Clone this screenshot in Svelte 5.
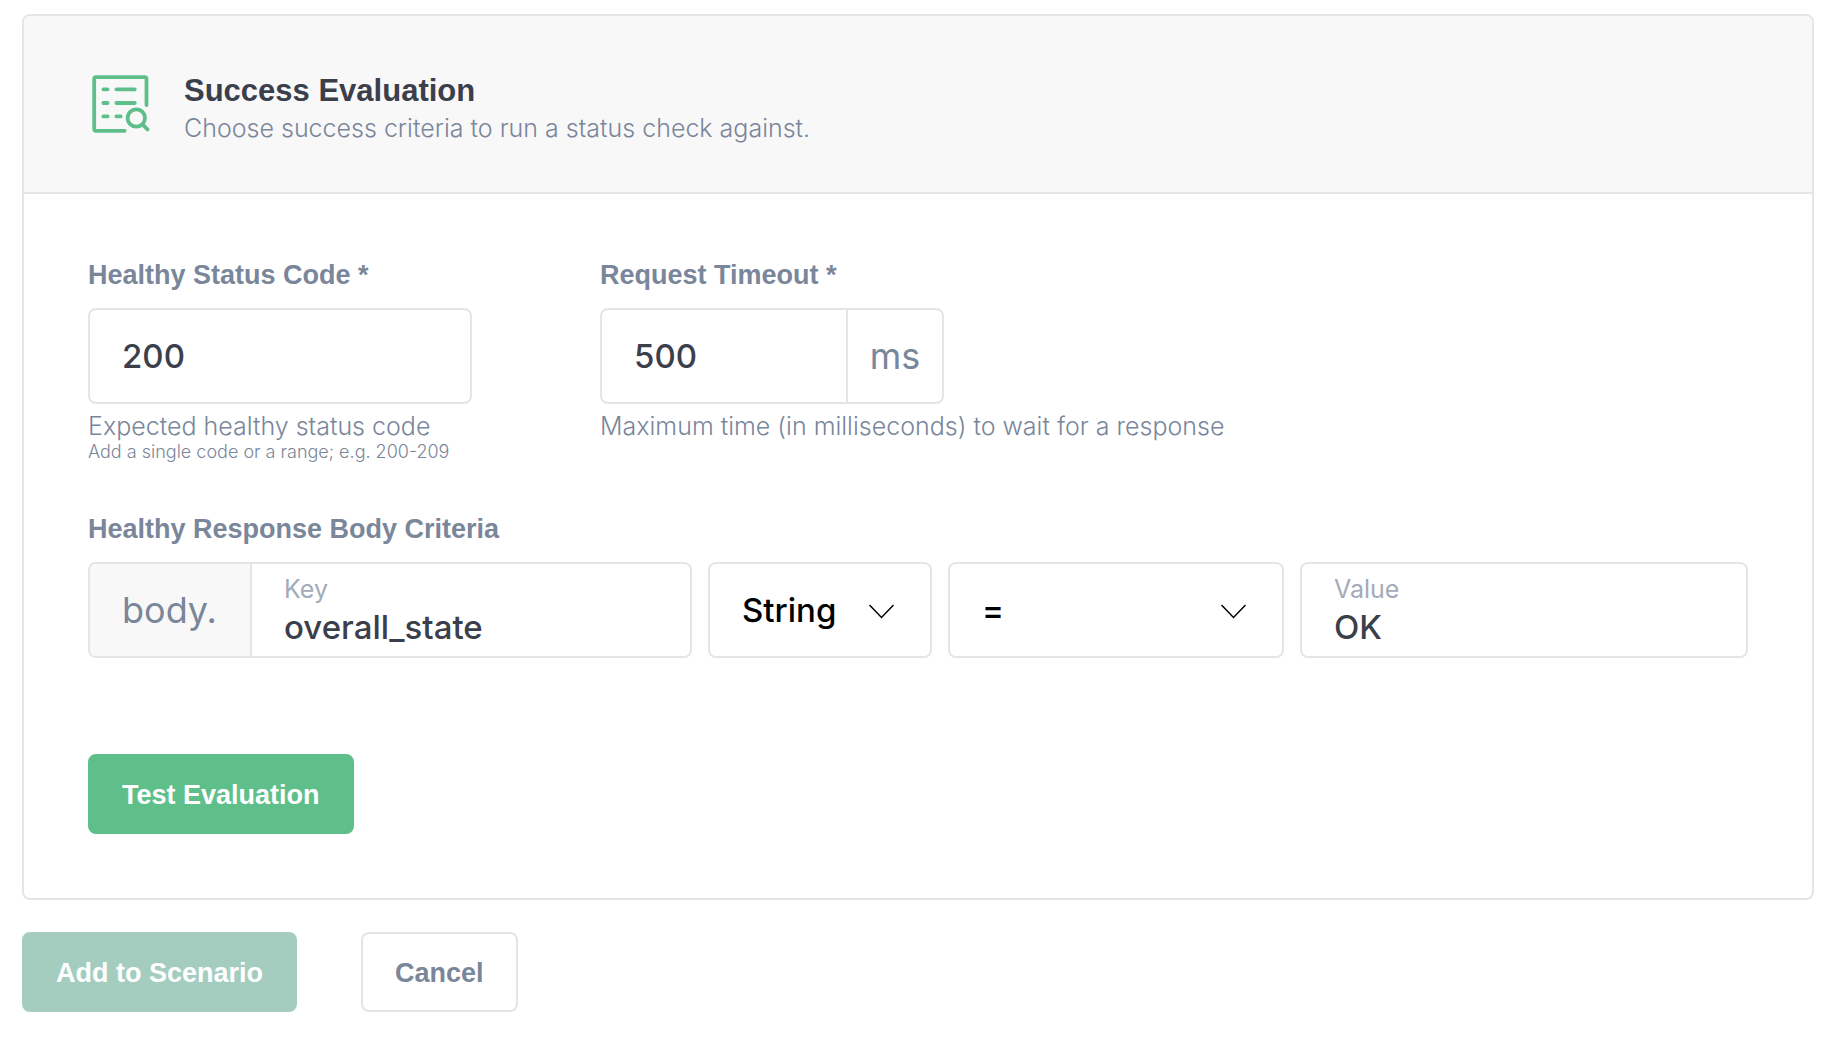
<script lang="ts">
	let statusCode = $state('200');
	let timeout = $state('500');
	let bodyKey = $state('overall_state');
	let dataType = $state('String');
	let operator = $state('=');
	let expected = $state('OK');

	const dataTypes = ['String', 'Number'];
	const operators = ['=', '!=', '>', '<'];
</script>

{#snippet chevron()}
	<svg class="chevron" viewBox="0 0 26 18" aria-hidden="true">
		<path d="M1.5 4 13.5 16.5 25.5 4" />
	</svg>
{/snippet}

<main class="page">
	<form class="card" id="evaluation" onsubmit={(e) => e.preventDefault()}>
		<header class="card-head">
			<svg class="icon" viewBox="0 0 64 64" aria-hidden="true">
				<path d="M36.6 58.8H8A1.8 1.8 0 0 1 6.2 57V7A1.8 1.8 0 0 1 8 5.2h48.7A1.8 1.8 0 0 1 58.5 7v26" />
				<path d="M15.4 17.3h4.2M28.4 17.3h18.4M15.4 31h4.2M28.4 31h18.4M15.4 44.4h4.2M28.4 44.4h4.2" />
				<circle cx="48.3" cy="46" r="8.7" />
				<path d="m54.7 52.6 4.8 4.8" />
			</svg>
			<div class="head-text">
				<h2>Success Evaluation</h2>
				<p>Choose success criteria to run a status check against.</p>
			</div>
		</header>

		<div class="card-body">
			<div class="fields">
				<div class="field code">
					<label class="label" for="status-code">Healthy Status Code *</label>
					<div class="box">
						<input id="status-code" type="text" bind:value={statusCode} />
					</div>
					<p class="help">Expected healthy status code</p>
					<p class="hint">Add a single code or a range; e.g. 200-209</p>
				</div>

				<div class="field">
					<label class="label" for="timeout">Request Timeout *</label>
					<div class="box timeout">
						<input id="timeout" type="text" bind:value={timeout} />
						<span class="unit">ms</span>
					</div>
					<p class="help">Maximum time (in milliseconds) to wait for a response</p>
				</div>
			</div>

			<fieldset>
				<legend class="label">Healthy Response Body Criteria</legend>
				<div class="criteria">
					<div class="box">
						<span class="prefix">body.</span>
						<label class="floating">
							<span>Key</span>
							<input type="text" bind:value={bodyKey} />
						</label>
					</div>
					<div class="box select">
						<select aria-label="Data type" bind:value={dataType}>
							{#each dataTypes as type}
								<option>{type}</option>
							{/each}
						</select>
						{@render chevron()}
					</div>
					<div class="box select">
						<select aria-label="Operator" bind:value={operator}>
							{#each operators as op}
								<option>{op}</option>
							{/each}
						</select>
						{@render chevron()}
					</div>
					<div class="box">
						<label class="floating">
							<span>Value</span>
							<input type="text" bind:value={expected} />
						</label>
					</div>
				</div>
			</fieldset>

			<button type="button" class="btn primary">Test Evaluation</button>
		</div>
	</form>

	<div class="actions">
		<button type="submit" form="evaluation" class="btn primary" disabled>Add to Scenario</button>
		<button type="button" class="btn">Cancel</button>
	</div>
</main>

<style>
	:global(body) {
		background: #fff;
	}
	.page {
		--line: #e5e5e5;
		--muted: #7a869a;
		--ink: #3b3f4c;
		--green: #5fbf8b;
		--shade: #f8f8f8;
		--heading: 'Liberation Sans', Arial, sans-serif;
		padding: 14px 28px 30px 22px;
		font-family: Inter, sans-serif;
		color: var(--muted);
	}
	.page,
	.page * {
		box-sizing: border-box;
	}
	.card {
		border: 2px solid var(--line);
		border-radius: 8px;
		overflow: hidden;
	}
	.card-head {
		display: flex;
		align-items: center;
		gap: 32px;
		height: 178px;
		padding: 0 64px;
		background: var(--shade);
		border-bottom: 2px solid var(--line);
	}
	.icon {
		flex: none;
		width: 64px;
		height: 64px;
		fill: none;
		stroke: var(--green);
		stroke-width: 3.8;
		stroke-linecap: round;
		stroke-linejoin: round;
	}
	.head-text {
		padding-top: 12px;
	}
	h2,
	p {
		margin: 0;
	}
	h2 {
		font-family: var(--heading);
		font-size: 31px;
		line-height: 36px;
		font-weight: 700;
		color: var(--ink);
	}
	.head-text p {
		font-size: 25px;
		line-height: 38px;
		font-weight: 300;
	}
	.card-body {
		padding: 64px;
	}
	.fields {
		display: flex;
		gap: 128px;
	}
	.code {
		width: 384px;
	}
	.label {
		display: block;
		margin-bottom: 16px;
		padding: 0;
		font-family: var(--heading);
		font-size: 27px;
		line-height: 34px;
		font-weight: 700;
	}
	.box {
		display: flex;
		height: 96px;
		border: 2px solid var(--line);
		border-radius: 8px;
		background: #fff;
		overflow: hidden;
	}
	.timeout {
		width: 344px;
	}
	input,
	select {
		flex: 1;
		width: 100%;
		min-width: 0;
		border: 0;
		outline: 0;
		padding: 0 32px;
		background: transparent;
		font-family: inherit;
		font-size: 33px;
		font-weight: 500;
		color: var(--ink);
	}
	.unit,
	.prefix {
		display: flex;
		align-items: center;
		font-size: 36px;
	}
	.unit {
		justify-content: center;
		width: 96px;
		border-left: 2px solid var(--line);
	}
	.prefix {
		width: 162px;
		padding: 0 32px;
		background: var(--shade);
		border-right: 2px solid var(--line);
	}
	.help {
		margin-top: 8px;
		font-size: 25px;
		line-height: 28px;
		font-weight: 300;
	}
	.hint {
		font-size: 18px;
		line-height: 24px;
		font-weight: 300;
	}
	fieldset {
		min-width: 0;
		margin: 48px 0 96px;
		border: 0;
		padding: 0;
	}
	.criteria {
		display: grid;
		grid-template-columns: 604fr 224fr 336fr 448fr;
		gap: 16px;
	}
	.floating {
		flex: 1;
		display: flex;
		flex-direction: column;
		min-width: 0;
		padding: 8px 32px;
	}
	.floating span {
		font-size: 25px;
		line-height: 34px;
		color: #a3abb9;
	}
	.floating input {
		flex: none;
		height: 42px;
		padding: 0;
	}
	.select {
		display: grid;
		align-items: center;
	}
	.select > :global(*) {
		grid-area: 1 / 1;
	}
	select {
		height: 100%;
		appearance: none;
		color: #000;
	}
	.chevron {
		justify-self: end;
		width: 26px;
		height: 18px;
		margin-right: 36px;
		fill: none;
		stroke: #000;
		stroke-width: 1.5;
		pointer-events: none;
	}
	.btn {
		height: 80px;
		border: 2px solid var(--line);
		border-radius: 8px;
		padding: 2px 32px 0;
		background: #fff;
		font-family: var(--heading);
		font-size: 27px;
		font-weight: 700;
		color: var(--muted);
		cursor: pointer;
	}
	.primary {
		display: block;
		border-color: var(--green);
		background: var(--green);
		color: #fff;
	}
	.primary:disabled {
		border-color: #a4cdc0;
		background: #a4cdc0;
		cursor: default;
	}
	.actions {
		display: flex;
		gap: 64px;
		margin-top: 32px;
	}
</style>
